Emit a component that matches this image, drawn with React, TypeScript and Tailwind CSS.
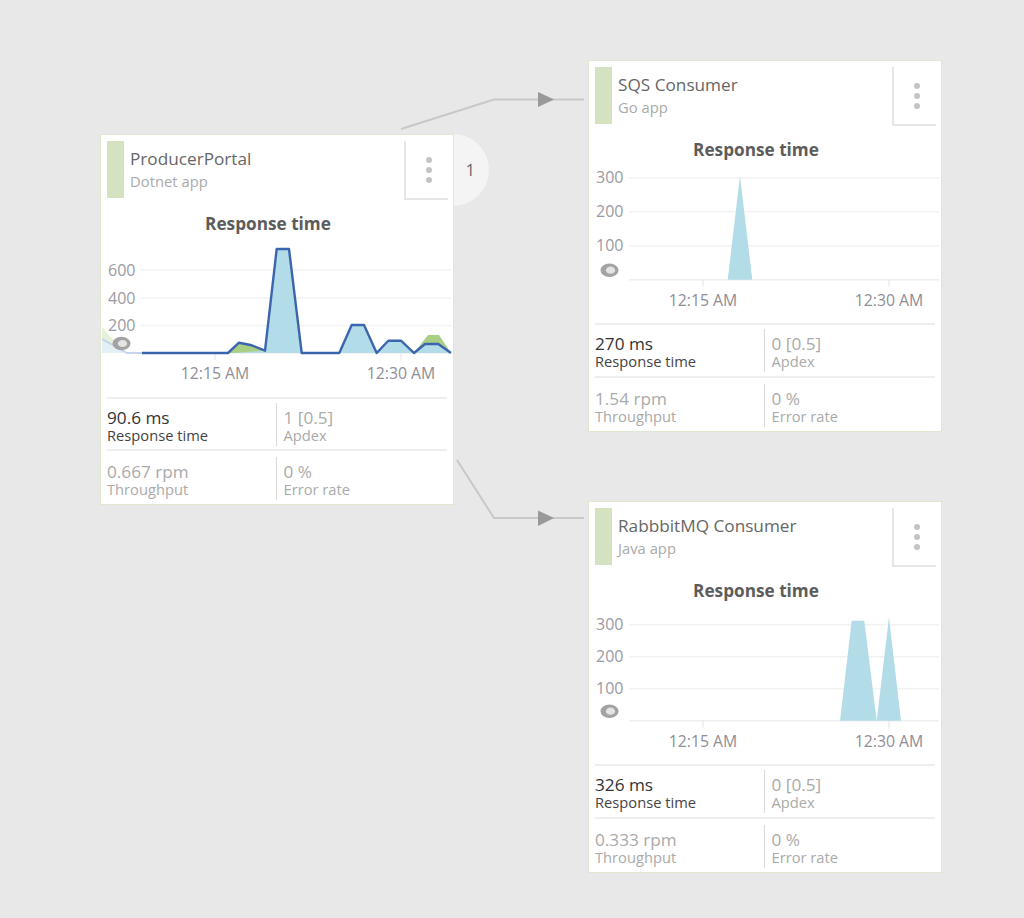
import React from "react";

type Pt = [number, number];

type Series = {
  grid: { label: string; y: number }[];
  base: number;
  area: Pt[];
  green?: Pt[][];
  line?: Pt[];
  faded?: boolean;
};

type Metric = { value: string; label: string };

type NodeProps = {
  pos: string;
  rowGap: string;
  name: string;
  kind: string;
  chart: Series;
  metrics: [Metric, Metric, Metric, Metric];
};

const toPoints = (pts: Pt[]) => pts.map((p) => p.join(",")).join(" ");

const ResponseChart: React.FC<{ data: Series }> = ({ data }) => (
  <svg viewBox="0 0 352 150" className="block w-[352px] h-[150px]">
    {data.grid.map((g) => (
      <g key={g.label}>
        <line x1="40" x2="350" y1={g.y} y2={g.y} stroke="#f2f2f2" strokeWidth="1.5" />
        <text x="34.5" y={g.y + 5.5} textAnchor="end" fontSize="16" fill="#9a9aa2">
          {g.label}
        </text>
      </g>
    ))}
    <line x1="40" x2="350" y1={data.base} y2={data.base} stroke="#efefef" strokeWidth="1.5" />
    {[114, 300].map((x) => (
      <line key={x} x1={x} x2={x} y1={data.base} y2={data.base + 7} stroke="#e4e4e4" />
    ))}
    <text x="114" y={data.base + 26} textAnchor="middle" fontSize="15.8" fill="#8e8e96">
      12:15 AM
    </text>
    <text x="300" y={data.base + 26} textAnchor="middle" fontSize="15.8" fill="#8e8e96">
      12:30 AM
    </text>
    {data.faded && (
      <>
        <polygon points="1,92 1,118 24,118" fill="#e6f0da" />
        <polygon points="1,105 1,118 27,118" fill="#e3f1f6" />
        <polyline points="1,104 26,118 41,118" fill="none" stroke="#c5d3ec" strokeWidth="2" />
      </>
    )}
    {data.green?.map((g, i) => <polygon key={i} points={toPoints(g)} fill="#a9cf85" />)}
    <polygon points={toPoints(data.area)} fill="#b2dce8" />
    {data.line && (
      <polyline
        points={toPoints(data.line)}
        fill="none"
        stroke="#3b65ae"
        strokeWidth="2.4"
        strokeLinejoin="round"
      />
    )}
    {/* eye marker */}
    <ellipse cx="20.5" cy={data.base - 9.5} rx="9" ry="6.8" fill="#a3a3a3" />
    <ellipse cx="21.5" cy={data.base - 9.5} rx="4.6" ry="3.6" fill="#e4e4e4" />
  </svg>
);

const MetricCell: React.FC<{ m: Metric; dark?: boolean; right?: boolean }> = ({ m, dark, right }) => (
  <div className={right ? "w-[171px] h-[43px] border-l border-[#d9d9d9] pl-[6px] pt-[6px]" : "w-[170px] h-[43px] pt-[6px]"}>
    <div className={dark ? "text-[17.2px] leading-[18px] text-[#333333]" : "text-[17.2px] leading-[18px] text-[#aaaaaa]"}>
      {m.value}
    </div>
    <div className={dark ? "text-[14.7px] leading-[16px] text-[#444444]" : "text-[14.7px] leading-[16px] text-[#aaaaaa]"}>
      {m.label}
    </div>
  </div>
);

const AppNode: React.FC<NodeProps> = ({ pos, rowGap, name, kind, chart, metrics }) => (
  <div className={`absolute ${pos} w-[354px] bg-white border border-[#dfe8cf]`}>
    <div className="flex pt-[6px] pl-[6px] pr-[5px]">
      <div className="w-[17px] h-[57px] bg-[#d5e2bf]" />
      <div className="flex-1 pl-[6px] pt-[6px]">
        <div className="text-[17.2px] leading-[24px] text-[#666666]">{name}</div>
        <div className="text-[14.8px] leading-[20px] text-[#aaaaaa]">{kind}</div>
      </div>
      <div className="w-[44px] h-[59px] border-l-2 border-b-2 border-[#e6e6e6] flex flex-col items-center justify-center gap-[4px] pl-[4px]">
        <span className="w-[6px] h-[6px] rounded-full bg-[#c4c4c4]" />
        <span className="w-[6px] h-[6px] rounded-full bg-[#c4c4c4]" />
        <span className="w-[6px] h-[6px] rounded-full bg-[#c4c4c4]" />
      </div>
    </div>
    <div className="h-[35px] pt-[12px] pr-[18px] text-center text-[17.2px] leading-[24px] font-bold text-[#5c5c5c]">
      Response time
    </div>
    <ResponseChart data={chart} />
    <div className="mx-[6px] mt-[12px] border-t-2 border-[#eeeeee] pt-[4px] flex">
      <MetricCell m={metrics[0]} dark />
      <MetricCell m={metrics[1]} right />
    </div>
    <div className={`mx-[6px] ${rowGap} border-t-2 border-[#eeeeee] pt-[6px] flex`}>
      <MetricCell m={metrics[2]} />
      <MetricCell m={metrics[3]} right />
    </div>
  </div>
);

const producer: Series = {
  grid: [
    { label: "600", y: 35 },
    { label: "400", y: 63 },
    { label: "200", y: 90.6 },
  ],
  base: 118,
  faded: true,
  green: [
    [[127, 118], [138, 107.7], [150.7, 110.3], [164, 115.7], [164, 118]],
    [[316, 114], [327, 100], [338, 100], [350, 118], [316, 118]],
  ],
  area: [
    [132, 118], [164, 115.7], [175.7, 14], [188, 14], [200.7, 118], [238.3, 118], [250.7, 90], [263, 90],
    [275.7, 118], [287.3, 105.7], [300, 105.7], [313, 118], [324, 109], [337.3, 109], [350, 118],
  ],
  line: [
    [41, 118], [127, 118], [138, 107.7], [150.7, 110.3], [164, 115.7], [175.7, 14], [188, 14], [200.7, 118],
    [238.3, 118], [250.7, 90], [263, 90], [275.7, 118], [287.3, 105.7], [300, 105.7], [313, 118], [324, 109],
    [337.3, 109], [350, 118],
  ],
};

const sqs: Series = {
  grid: [
    { label: "300", y: 16.7 },
    { label: "200", y: 50.7 },
    { label: "100", y: 84.7 },
  ],
  base: 118.7,
  area: [[138.7, 118.7], [151, 15], [163.3, 118.7]],
};

const rabbit: Series = {
  grid: [
    { label: "300", y: 22.7 },
    { label: "200", y: 54.7 },
    { label: "100", y: 86.7 },
  ],
  base: 118.7,
  area: [
    [251, 118.7], [262.7, 18.7], [275.3, 18.7], [287.7, 118.7], [300, 15.3], [312, 118.7],
  ],
};

export default function App() {
  return (
    <div
      className="relative w-[1024px] h-[918px] overflow-hidden bg-[#e8e8e8]"
      style={{ fontFamily: '"Open Sans", sans-serif' }}
    >
      {/* connectors */}
      <svg viewBox="0 0 1024 918" className="absolute left-0 top-0 w-[1024px] h-[918px]">
        <polyline points="401,129 494,99.5 584,99.5" fill="none" stroke="#c8c8c8" strokeWidth="2" />
        <polygon points="538,92 554,99.5 538,107" fill="#999999" />
        <polyline points="457,460 494,518 584,518" fill="none" stroke="#c8c8c8" strokeWidth="2" />
        <polygon points="538,510.5 554,518 538,526" fill="#999999" />
      </svg>

      {/* instance count bubble sits behind the card */}
      <div className="absolute left-[417px] top-[134px] w-[72px] h-[72px] rounded-full bg-[#f4f4f4] flex items-center justify-end pr-[14px] text-[16px] text-[#666666]">
        1
      </div>

      <AppNode
        pos="left-[100px] top-[134px] h-[371px]"
        rowGap="mt-[3px]"
        name="ProducerPortal"
        kind="Dotnet app"
        chart={producer}
        metrics={[
          { value: "90.6 ms", label: "Response time" },
          { value: "1 [0.5]", label: "Apdex" },
          { value: "0.667 rpm", label: "Throughput" },
          { value: "0 %", label: "Error rate" },
        ]}
      />
      <AppNode
        pos="left-[588px] top-[60px] h-[372px]"
        rowGap="mt-[4px]"
        name="SQS Consumer"
        kind="Go app"
        chart={sqs}
        metrics={[
          { value: "270 ms", label: "Response time" },
          { value: "0 [0.5]", label: "Apdex" },
          { value: "1.54 rpm", label: "Throughput" },
          { value: "0 %", label: "Error rate" },
        ]}
      />
      <AppNode
        pos="left-[588px] top-[501px] h-[372px]"
        rowGap="mt-[4px]"
        name="RabbbitMQ Consumer"
        kind="Java app"
        chart={rabbit}
        metrics={[
          { value: "326 ms", label: "Response time" },
          { value: "0 [0.5]", label: "Apdex" },
          { value: "0.333 rpm", label: "Throughput" },
          { value: "0 %", label: "Error rate" },
        ]}
      />
    </div>
  );
}
